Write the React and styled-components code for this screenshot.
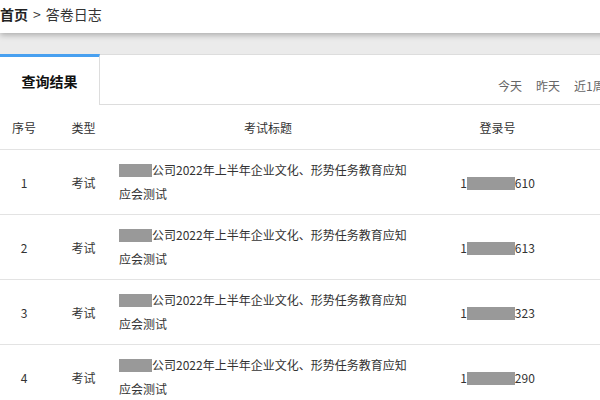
import React from "react";
import styled, { createGlobalStyle } from "styled-components";

const GlobalStyle = createGlobalStyle`
  html, body {
    margin: 0;
    padding: 0;
    background: #ffffff;
    overflow: hidden;
  }
  body {
    font-family: "Microsoft YaHei", "Noto Sans CJK SC", "Noto Sans", sans-serif;
    color: #333;
  }
`;

const Page = styled.div`
  width: 700px;
  background: #ebebeb;
`;

const Breadcrumb = styled.div`
  height: 33px;
  box-sizing: border-box;
  padding-top: 4px;
  background: #fff;
  font-size: 14px;
  line-height: 20px;
  color: #333;
  box-shadow: 0 2px 6px rgba(0, 0, 0, 0.28);
  position: relative;
  z-index: 1;
  display: flex;
  gap: 5px;
`;

const Home = styled.span`
  font-weight: bold;
  color: #222;
`;

const Gap = styled.div`
  height: 21px;
`;

const Panel = styled.div`
  background: #fff;
  border-top: 1px solid #dddddd;
`;

const TabBar = styled.div`
  display: flex;
  height: 50px;
`;

const Tab = styled.div`
  width: 100px;
  box-sizing: border-box;
  border-top: 3px solid #48a0f0;
  margin-top: -1px;
  border-right: 1px solid #dddddd;
  display: flex;
  align-items: center;
  justify-content: center;
  font-size: 14px;
  font-weight: bold;
  color: #111;
`;

const TabRest = styled.div`
  flex: 1;
  border-bottom: 1px solid #dddddd;
  display: flex;
  align-items: flex-start;
  padding-top: 22px;
  padding-left: 391px;
`;

const Filter = styled.span`
  font-size: 12px;
  line-height: 18px;
  color: #666;
  padding: 0 7px;
  white-space: nowrap;
`;

const Table = styled.table`
  border-collapse: collapse;
  table-layout: fixed;
  width: 700px;
  font-size: 12px;
`;

const HeadCell = styled.th`
  height: 44px;
  padding: 0;
  font-weight: normal;
  color: #333;
  text-align: center;
  border-bottom: 1px solid #e3e3e3;
  white-space: nowrap;
`;

const Row = styled.tr`
  border-bottom: 1px solid #e3e3e3;
`;

const Cell = styled.td`
  height: 64px;
  padding: 0;
  text-align: ${(p) => p.$align || "center"};
  vertical-align: middle;
  color: #333;
`;

const TitleText = styled.div`
  line-height: 24px;
  text-align: left;
`;

const Mask = styled.span`
  display: inline-block;
  width: ${(p) => p.$w}px;
  height: 13px;
  background: #999999;
  vertical-align: -2px;
`;

const rows = [
  { id: 1, tail: "610" },
  { id: 2, tail: "613" },
  { id: 3, tail: "323" },
  { id: 4, tail: "290" },
];

export default function App() {
  return (
    <>
      <GlobalStyle />
      <Page>
        <Breadcrumb>
          <Home>首页</Home>
          <span>&gt;</span>
          <span>答卷日志</span>
        </Breadcrumb>
        <Gap />
        <Panel>
          <TabBar>
            <Tab>查询结果</Tab>
            <TabRest>
              <Filter>今天</Filter>
              <Filter>昨天</Filter>
              <Filter>近1周</Filter>
              <Filter>近1月</Filter>
            </TabRest>
          </TabBar>
          <Table>
            <colgroup>
              <col style={{ width: 48 }} />
              <col style={{ width: 71 }} />
              <col style={{ width: 298 }} />
              <col style={{ width: 161 }} />
              <col style={{ width: 122 }} />
            </colgroup>
            <thead>
              <tr>
                <HeadCell>序号</HeadCell>
                <HeadCell>类型</HeadCell>
                <HeadCell>考试标题</HeadCell>
                <HeadCell>登录号</HeadCell>
                <HeadCell>答题时间</HeadCell>
              </tr>
            </thead>
            <tbody>
              {rows.map((r) => (
                <Row key={r.id}>
                  <Cell>{r.id}</Cell>
                  <Cell>考试</Cell>
                  <Cell $align="left">
                    <TitleText>
                      <Mask $w={33} />
                      公司2022年上半年企业文化、形势任务教育应知应会测试
                    </TitleText>
                  </Cell>
                  <Cell>
                    1<Mask $w={48} />
                    {r.tail}
                  </Cell>
                  <Cell />
                </Row>
              ))}
            </tbody>
          </Table>
        </Panel>
      </Page>
    </>
  );
}
